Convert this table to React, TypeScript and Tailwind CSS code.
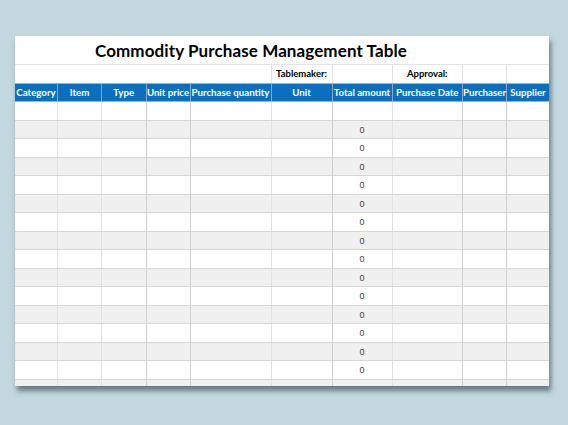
const cols = [
  { name: 'Category', line: 'border-[#e2e2e2]' },
  { name: 'Item', line: 'border-[#e2e2e2]' },
  { name: 'Type', line: 'border-[#cfcfcf]' },
  { name: 'Unit price', line: 'border-[#cfcfcf]' },
  { name: 'Purchase quantity', line: 'border-[#e2e2e2]' },
  { name: 'Unit', line: 'border-[#cfcfcf]' },
  { name: 'Total amount', line: 'border-[#e2e2e2]' },
  { name: 'Purchase Date', line: 'border-[#cfcfcf]' },
  { name: 'Purchaser', line: 'border-[#cfcfcf]' },
  { name: 'Supplier', line: 'border-transparent' },
];

const grid = 'grid grid-cols-[43px_44px_44.5px_44px_81px_61px_60px_70.5px_44px_42px]';

export default function App() {
  const rows = Array.from({ length: 16 }, (_, i) => i);

  return (
    <div className="w-[568px] h-[425px] bg-[#c2d8de] pt-[36px] pl-[15px] font-['Lato',sans-serif] overflow-hidden">
      <div className="w-[534px] h-[350px] bg-white overflow-hidden shadow-[2px_5px_5px_rgba(40,60,70,0.6)]">
        {/* Title */}
        <div className="h-[29px] flex items-center justify-center border-b border-[#e4e4e4]">
          <span className="text-[17px] font-bold text-black tracking-[0.1px] ml-[-62px] mt-[1px]">
            Commodity Purchase Management Table
          </span>
        </div>

        {/* Tablemaker / Approval row */}
        <div className={`${grid} h-[18px] text-[9.5px] font-bold text-black`}>
          <div className="col-span-5 border-r border-[#e2e2e2]" />
          <div className="flex items-center justify-center border-r border-[#e2e2e2]">Tablemaker:</div>
          <div className="border-r border-[#e2e2e2]" />
          <div className="flex items-center justify-center border-r border-[#e2e2e2]">Approval:</div>
          <div className="border-r border-[#e2e2e2]" />
          <div />
        </div>

        {/* Header */}
        <div className={`${grid} h-[19px] bg-[#0b6fc0] border-y border-[#9cb6cc]`}>
          {cols.map((c, i) => (
            <div
              key={c.name}
              className={`flex items-center justify-center text-[9.7px] font-bold text-white whitespace-nowrap ${
                i < cols.length - 1 ? 'border-r border-[#8aa9c6]' : ''
              }`}
            >
              {c.name}
            </div>
          ))}
        </div>

        {/* Body */}
        {rows.map((r) => (
          <div
            key={r}
            className={`${grid} h-[18.5px] border-b border-[#d6d6d6] ${r % 2 === 1 ? 'bg-[#f0f0f0]' : 'bg-white'}`}
          >
            {cols.map((c, i) => (
              <div
                key={c.name}
                className={`flex items-center justify-center pt-[2px] border-r ${c.line} text-[9px] text-[#444] font-['Liberation_Sans',sans-serif]`}
              >
                {i === 6 && r > 0 && r < 15 ? '0' : ''}
              </div>
            ))}
          </div>
        ))}
      </div>
    </div>
  );
}
